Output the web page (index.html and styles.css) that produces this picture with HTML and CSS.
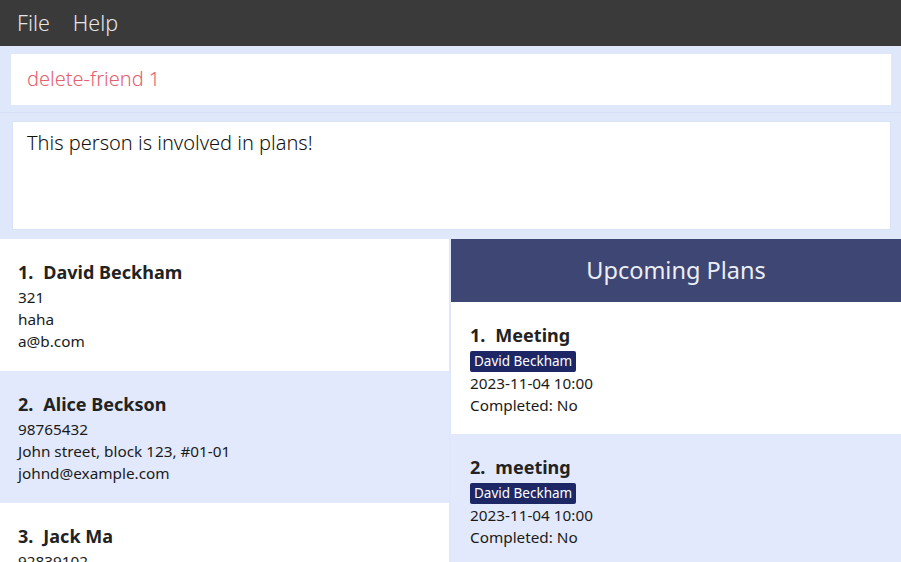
FILE: index.html
```html
<!DOCTYPE html>
<html>
<head>
<meta charset="utf-8">
<link rel="stylesheet" href="styles.css">
</head>
<body>
<div class="app">
  <nav class="menubar">
    <span class="menu-item">File</span>
    <span class="menu-item">Help</span>
  </nav>
  <div class="command-wrap">
    <div class="command-box">delete-friend 1</div>
  </div>
  <div class="result-wrap">
    <div class="result-box">This person is involved in plans!</div>
  </div>
  <div class="panes">
    <div class="list persons">
      <div class="card">
        <div class="name"><span class="idx">1.</span>David Beckham</div>
        <div class="line">321</div>
        <div class="line">haha</div>
        <div class="line">a@b.com</div>
      </div>
      <div class="card alt">
        <div class="name"><span class="idx">2.</span>Alice Beckson</div>
        <div class="line">98765432</div>
        <div class="line">John street, block 123, #01-01</div>
        <div class="line">johnd@example.com</div>
      </div>
      <div class="card">
        <div class="name"><span class="idx">3.</span>Jack Ma</div>
        <div class="line">92839102</div>
        <div class="line">Some street</div>
        <div class="line">jack@example.com</div>
      </div>
    </div>
    <div class="list plans">
      <div class="plans-header">Upcoming Plans</div>
      <div class="card">
        <div class="name"><span class="idx">1.</span>Meeting</div>
        <div class="tags"><span class="tag">David Beckham</span></div>
        <div class="line">2023-11-04 10:00</div>
        <div class="line">Completed: No</div>
      </div>
      <div class="card alt">
        <div class="name"><span class="idx">2.</span>meeting</div>
        <div class="tags"><span class="tag">David Beckham</span></div>
        <div class="line">2023-11-04 10:00</div>
        <div class="line">Completed: No</div>
      </div>
    </div>
  </div>
</div>
</body>
</html>
```
FILE: styles.css
```css
html, body {
  margin: 0;
  padding: 0;
  height: 100%;
  overflow: hidden;
}
body {
  font-family: "Noto Sans", "Open Sans", sans-serif;
  background: #dfe8fb;
  color: #222;
}
.app {
  display: flex;
  flex-direction: column;
  height: 562px;
}
.menubar {
  height: 46px;
  background: #3a3a3a;
  display: flex;
  align-items: center;
  padding-left: 17px;
  gap: 23px;
  box-sizing: border-box;
}
.menu-item {
  color: #e6e6e6;
  font-size: 21.5px;
  font-weight: 300;
  padding-bottom: 1px;
}
.command-wrap {
  padding: 8px 10px 4px 11px;
}
.command-box {
  background: #fff;
  height: 51px;
  box-sizing: border-box;
  padding: 11px 0 0 16px;
  font-size: 20px;
  font-weight: 300;
  color: #e4606e;
}
.result-wrap {
  margin-top: 3px;
  border-top: 1px solid #d6e1f7;
  padding: 8px 10px 9px 12px;
}
.result-box {
  background: #fff;
  border: 1px solid #d8e3f8;
  height: 109px;
  box-sizing: border-box;
  padding: 7px 0 0 14px;
  font-size: 20px;
  font-weight: 300;
  color: #111;
}
.panes {
  flex: 1;
  display: flex;
  gap: 2px;
  overflow: hidden;
}
.list {
  background: #fff;
  overflow: hidden;
}
.persons {
  width: 449px;
}
.plans {
  flex: 1;
}
.plans-header {
  height: 63px;
  background: #3e4773;
  color: #eceef6;
  font-size: 23.5px;
  display: flex;
  align-items: center;
  justify-content: center;
  padding-bottom: 2px;
  box-sizing: border-box;
}
.card {
  height: 132px;
  box-sizing: border-box;
  padding: 20px 0 0 18px;
  background: #fff;
}
.plans .card {
  padding-left: 19px;
}
.card.alt {
  background: #e3e9fc;
}
.name {
  font-size: 18px;
  font-weight: 700;
  color: #222;
  line-height: 26px;
  margin-bottom: 1px;
}
.idx {
  margin-right: 10px;
}
.line {
  font-size: 15.3px;
  line-height: 22px;
  color: #1a1a1a;
}
.tags {
  display: flex;
  line-height: 0;
}
.tag {
  background: #1d2766;
  color: #fff;
  font-size: 13.5px;
  line-height: 21px;
  padding: 0 4px;
  border-radius: 2px;
  margin: 2px 0 0;
}
```
